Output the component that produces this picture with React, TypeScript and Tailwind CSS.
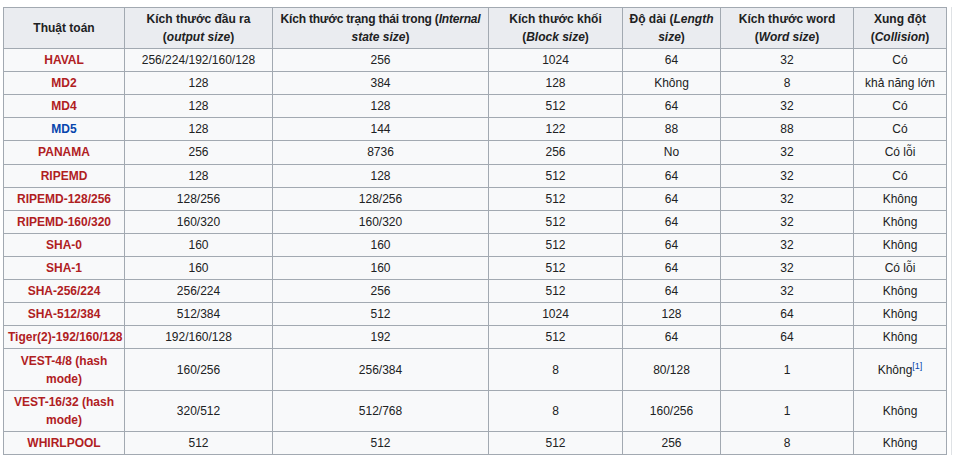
import React from 'react'

type Row = {
  name: string
  blue?: boolean
  cells: string[]
  note?: boolean
}

const rows: Row[] = [
  { name: 'HAVAL', cells: ['256/224/192/160/128', '256', '1024', '64', '32', 'Có'] },
  { name: 'MD2', cells: ['128', '384', '128', 'Không', '8', 'khả năng lớn'] },
  { name: 'MD4', cells: ['128', '128', '512', '64', '32', 'Có'] },
  { name: 'MD5', blue: true, cells: ['128', '144', '122', '88', '88', 'Có'] },
  { name: 'PANAMA', cells: ['256', '8736', '256', 'No', '32', 'Có lỗi'] },
  { name: 'RIPEMD', cells: ['128', '128', '512', '64', '32', 'Có'] },
  { name: 'RIPEMD-128/256', cells: ['128/256', '128/256', '512', '64', '32', 'Không'] },
  { name: 'RIPEMD-160/320', cells: ['160/320', '160/320', '512', '64', '32', 'Không'] },
  { name: 'SHA-0', cells: ['160', '160', '512', '64', '32', 'Không'] },
  { name: 'SHA-1', cells: ['160', '160', '512', '64', '32', 'Có lỗi'] },
  { name: 'SHA-256/224', cells: ['256/224', '256', '512', '64', '32', 'Không'] },
  { name: 'SHA-512/384', cells: ['512/384', '512', '1024', '128', '64', 'Không'] },
  { name: 'Tiger(2)-192/160/128', cells: ['192/160/128', '192', '512', '64', '64', 'Không'] },
  { name: 'VEST-4/8 (hash mode)', cells: ['160/256', '256/384', '8', '80/128', '1', 'Không'], note: true },
  { name: 'VEST-16/32 (hash mode)', cells: ['320/512', '512/768', '8', '160/256', '1', 'Không'] },
  { name: 'WHIRLPOOL', cells: ['512', '512', '512', '256', '8', 'Không'] },
]

const th = 'border border-[#a2a9b1] bg-[#eaecf0] px-[4px] py-[2px] text-center font-bold'
const td = 'border border-[#a2a9b1] px-[4px] py-[2px] text-center'

export default function App() {
  return (
    <div
      className="h-[465px] w-[960px] bg-white pl-[3px] pt-[7px] text-[12px] leading-[18px] text-[#202122]"
      style={{ fontFamily: '"Liberation Sans", Arial, sans-serif' }}
    >
      <div className="flex">
        <table className="w-[943px] table-fixed border-collapse bg-[#f8f9fa]">
          <thead>
            <tr>
              <th className={`${th} w-[121px]`}>Thuật toán</th>
              <th className={`${th} w-[148px]`}>
                Kích thước đầu ra
                <br />(<i>output size</i>)
              </th>
              <th className={`${th} w-[216px]`}>
                <span className="whitespace-nowrap tracking-[-0.2px]">
                  Kích thước trạng thái trong (<i>Internal</i>
                </span>
                <br />
                <i>state size</i>)
              </th>
              <th className={`${th} w-[134px]`}>
                Kích thước khối
                <br />(<i>Block size</i>)
              </th>
              <th className={`${th} w-[98px]`}>
                Độ dài (<i>Length</i>
                <br />
                <i>size</i>)
              </th>
              <th className={`${th} w-[133px]`}>
                Kích thước word
                <br />(<i>Word size</i>)
              </th>
              <th className={`${th} w-[93px]`}>
                Xung đột
                <br />(<i>Collision</i>)
              </th>
            </tr>
          </thead>
          <tbody>
            {rows.map((r) => (
              <tr key={r.name}>
                <td className={`${td} font-bold ${r.blue ? 'text-[#0645ad]' : 'text-[#b0201f]'}`}>{r.name}</td>
                {r.cells.map((c, i) => (
                  <td key={i} className={td}>
                    {c}
                    {r.note && i === 5 && (
                      <sup className="text-[9px] leading-none text-[#0645ad]">[1]</sup>
                    )}
                  </td>
                ))}
              </tr>
            ))}
          </tbody>
        </table>
        <div className="ml-[4px] h-[448px] w-px bg-[#dfe2e5]" />
      </div>
    </div>
  )
}
